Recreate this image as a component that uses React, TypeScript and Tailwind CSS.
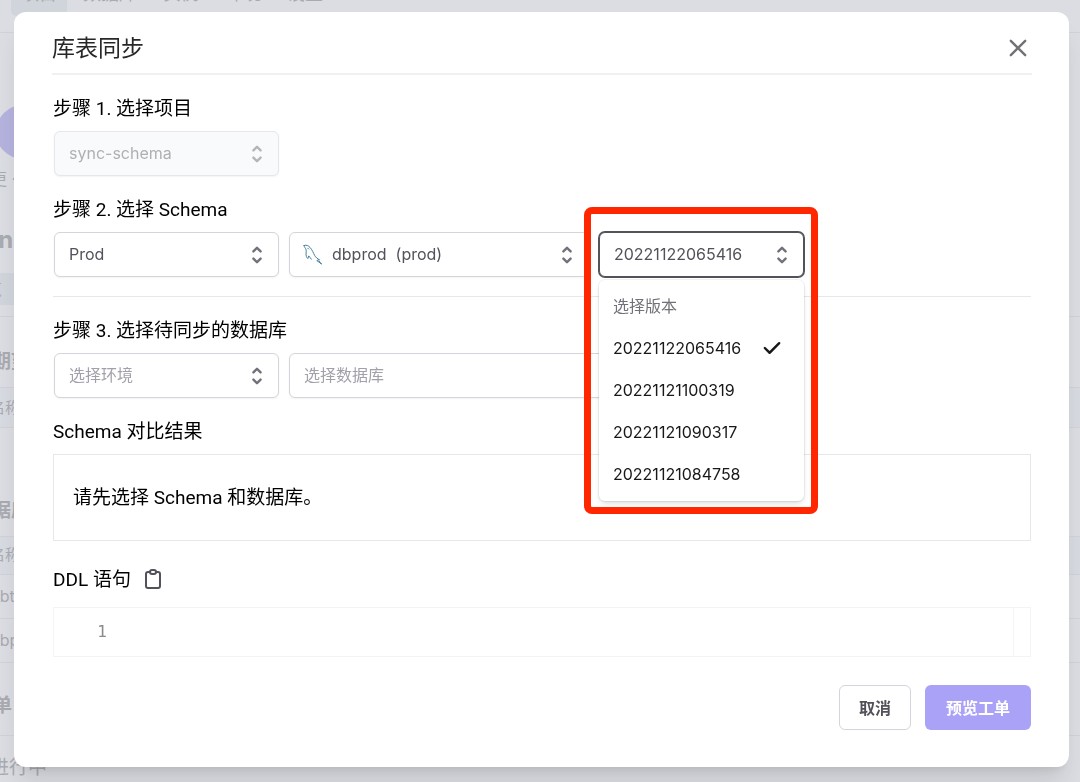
import React, { useState } from 'react';

const SELECTOR_PATH =
  'M10 3a1 1 0 01.707.293l3 3a1 1 0 01-1.414 1.414L10 5.414 7.707 7.707a1 1 0 01-1.414-1.414l3-3A1 1 0 0110 3zm-3.707 9.293a1 1 0 011.414 0L10 14.586l2.293-2.293a1 1 0 011.414 1.414l-3 3a1 1 0 01-1.414 0l-3-3a1 1 0 010-1.414z';

const VERSIONS = ['20221122065416', '20221121100319', '20221121090317', '20221121084758'];

const SelectorIcon = () => (
  <svg viewBox="0 0 20 20" fill="currentColor" className="pointer-events-none absolute inset-y-0 right-2.5 my-auto size-6">
    <path d={SELECTOR_PATH} fillRule="evenodd" clipRule="evenodd" />
  </svg>
);

const DolphinIcon = () => (
  <svg viewBox="0 0 24 24" fill="none" stroke="#2f7391" strokeWidth="0.9" strokeLinecap="round" strokeLinejoin="round" className="pointer-events-none absolute inset-y-0 left-3 my-auto size-6">
    <path d="M3 2.500c2.200-.8 4.300 0 6 1.900 2.400 2.700 3.200 5.400 4.700 8.100 1 1.800 2.800 3.300 4.800 4.300-1.300.1-2.200.4-2.700.9 1.300.9 3.300 1.900 4.600 3.200" />
    <path d="M3 2.500c.2 1.700 1.700 2.700 2.100 4.300.5 2-.6 4.200.3 6.600.5 1.300 1 2 1.600 2.100.5-.7.400-1.800.7-2.600 1 .9 1.700 2.200 2.600 3.300" />
    <path d="M6.800 5.200l.7.800" />
    <path d="M18.500 18.500l.6 1.400 1.200.6" />
  </svg>
);

interface SelectBoxProps {
  label: string;
  value: string;
  className: string;
  placeholder?: boolean;
  disabled?: boolean;
  icon?: React.ReactNode;
}

const SelectBox: React.FC<SelectBoxProps> = ({ label, value, className, placeholder, disabled, icon }) => (
  <div className={`relative ${disabled ? 'text-[#b5b5b9]' : 'text-[#71717a]'} ${className}`}>
    <select
      aria-label={label}
      disabled={disabled}
      className={`h-[45px] w-full appearance-none rounded-md border pr-10 pb-px text-base opacity-100 shadow-xs ${
        icon ? 'pl-[42px]' : 'pl-3.5'
      } ${
        disabled
          ? 'border-gray-200 bg-gray-50 text-[#b0b0b4]'
          : placeholder
            ? 'border-[#d3d5dd] bg-white text-[#a1a1aa]'
            : 'border-[#d3d5dd] bg-white text-[#52525b]'
      }`}
    >
      <option>{value}</option>
    </select>
    {icon}
    <SelectorIcon />
  </div>
);

const StepTitle: React.FC<{ children: React.ReactNode }> = ({ children }) => (
  <h3 className="pt-0.5 font-[Roboto,'Noto_Sans_CJK_SC',sans-serif] text-[19px] leading-[26px] text-black">{children}</h3>
);

const VersionSelect = () => {
  const [version, setVersion] = useState(VERSIONS[0]);

  return (
    <div className="relative w-[205px] shrink-0 text-[#71717a]">
      <select
        aria-label="选择版本"
        value={version}
        onChange={e => setVersion(e.target.value)}
        className="h-[45px] w-full appearance-none rounded-md border border-[#52525b] bg-white pr-10 pb-px pl-3.5 text-base text-[#52525b] ring-1 ring-[#52525b]"
      >
        {VERSIONS.map(v => (
          <option key={v}>{v}</option>
        ))}
      </select>
      <SelectorIcon />

      {/* Open menu */}
      <ul
        role="listbox"
        aria-label="选择版本"
        className="absolute inset-x-0 top-12 z-10 rounded-md bg-white pt-1 pb-1.5 text-base text-[#18181b] shadow-md ring-1 ring-black/5"
      >
        <li role="presentation" className="flex h-[43px] items-center px-3.5 text-[#71717a]">选择版本</li>
        {VERSIONS.map(v => (
          <li
            key={v}
            role="option"
            aria-selected={v === version}
            onClick={() => setVersion(v)}
            className="flex h-[42px] cursor-pointer items-center justify-between pr-5 pl-3.5"
          >
            {v}
            {v === version && (
              <svg viewBox="0 0 20 20" fill="currentColor" className="size-6">
                <path
                  fillRule="evenodd"
                  clipRule="evenodd"
                  d="M16.707 5.293a1 1 0 010 1.414l-8 8a1 1 0 01-1.414 0l-4-4a1 1 0 011.414-1.414L8 12.586l7.293-7.293a1 1 0 011.414 0z"
                />
              </svg>
            )}
          </li>
        ))}
      </ul>

      {/* Highlight frame */}
      <div className="pointer-events-none absolute -top-[25px] -right-3.5 -left-[15px] z-20 h-[307px] rounded-lg border-[7px] border-[#ff2600]" />
    </div>
  );
};

// Project page that shows around the dialog
const PageBehind = () => (
  <div aria-hidden="true" className="h-screen overflow-hidden bg-[#dcdde2] text-base whitespace-nowrap text-[#a9abb1]">
    <nav className="-mt-5 flex h-[53px] items-start gap-1.5 border-b border-[#d1d2d8] pl-[11px] text-lg leading-7">
      <span className="h-9 rounded-md bg-[#d0d4db] px-2.5">项目</span>
      <span className="px-2.5">数据库</span>
      <span className="px-2.5">实例</span>
      <span className="px-2.5">环境</span>
      <span className="px-2.5">设置</span>
    </nav>
    <div className="mt-[72px] -ml-1 size-[54px] rounded-full bg-[#b5b3de]" />
    <p className="mt-2 -ml-[25px] leading-6">变更 ·</p>
    <h1 className="mt-8 -ml-4 text-2xl leading-[34px] font-bold">end</h1>
    <div className="mt-4 h-8 w-10 bg-[#d0d4db]">
      <span className="-ml-3.5 leading-8">览</span>
    </div>
    <div className="mt-[11px] border-t border-[#d1d2d8] pt-[30px]">
      <h2 className="-ml-2 text-[19px] leading-[30px] font-bold">期望</h2>
    </div>
    <div className="mt-2.5 h-[41px] border-y border-[#d1d2d8] bg-[#d7dae0]">
      <span className="-ml-2.5 text-[15px] leading-10">名称</span>
    </div>
    <h2 className="mt-[68px] -ml-[27px] text-[19px] leading-[30px] font-bold">数据库</h2>
    <div className="mt-2.5 h-[39px] border-y border-[#d1d2d8] bg-[#d7dae0]">
      <span className="-ml-2.5 text-[15px] leading-9">名称</span>
    </div>
    <div className="h-11 border-b border-[#d1d2d8] leading-[43px]">
      <span className="-ml-2.5">dbtest</span>
    </div>
    <div className="h-11 border-b border-[#d1d2d8] leading-[43px]">
      <span className="-ml-2.5">dbprod</span>
    </div>
    <h2 className="mt-7 -ml-[26px] text-[19px] leading-[30px] font-bold">工单</h2>
    <div className="mt-3.5 border-t border-[#d1d2d8] pt-[18px]">
      <p className="-ml-2.5 text-[19px] leading-7">进行中</p>
    </div>
  </div>
);

export default function App() {
  return (
    <div className="font-[Inter,'Noto_Sans_CJK_SC',sans-serif]">
      <PageBehind />
      <div className="fixed inset-0 flex flex-col pt-3 pr-[11px] pb-[15px] pl-3.5">
        <div role="dialog" aria-label="库表同步" className="flex-1 rounded-xl bg-white pr-[37px] pl-[38px] shadow-xl">
          <header className="flex h-[63px] items-center justify-between border-b-2 border-[#f0f0f1] pt-2.5">
            <h2 className="text-[23px] leading-8 text-[#27272a]">库表同步</h2>
            <button aria-label="关闭" className="pr-[5px] text-[#71717a]">
              <svg viewBox="0 0 18 18" fill="none" stroke="currentColor" strokeWidth="2.4" strokeLinecap="round" className="size-[18px]">
                <path d="M1.800 1.800l14.400 14.400M16.200 1.800L1.800 16.200" />
              </svg>
            </button>
          </header>

          <div className="px-px pt-[19px]">
            <section className="flex flex-col gap-[9px]">
              <StepTitle>步骤 1. 选择项目</StepTitle>
              <div className="flex gap-2.5 pl-px">
                <SelectBox label="选择项目" value="sync-schema" className="w-[225px]" disabled />
              </div>
            </section>

            <section className="mt-[19px] flex flex-col gap-[9px] border-b border-gray-200 pb-[19px]">
              <StepTitle>步骤 2. 选择 Schema</StepTitle>
              <div className="flex gap-2.5 pl-px">
                <SelectBox label="环境" value="Prod" className="w-[225px]" />
                <SelectBox label="数据库" value={'dbprod\u00a0\u00a0(prod)'} className="w-[300px]" icon={<DolphinIcon />} />
                <VersionSelect />
              </div>
            </section>

            <section className="mt-[19px] flex flex-col gap-[9px]">
              <StepTitle>步骤 3. 选择待同步的数据库</StepTitle>
              <div className="flex gap-2.5 pl-px">
                <SelectBox label="选择环境" value="选择环境" className="w-[225px]" placeholder />
                <SelectBox label="选择数据库" value="选择数据库" className="w-[480px]" placeholder />
              </div>
            </section>

            <section className="mt-[19px] flex flex-col gap-[9px]">
              <StepTitle>Schema 对比结果</StepTitle>
              <p className="flex h-[87px] items-center border border-gray-200 px-[19px] font-[Roboto,'Noto_Sans_CJK_SC',sans-serif] text-[19px] leading-7 text-black">
                请先选择 Schema 和数据库。
              </p>
            </section>

            <section className="mt-6 flex flex-col gap-3.5">
              <div className="flex items-center gap-2.5">
                <StepTitle>DDL 语句</StepTitle>
                <button aria-label="复制" className="text-[#52525b]">
                  <svg viewBox="0 0 24 24" fill="none" stroke="currentColor" strokeWidth="2" strokeLinecap="round" strokeLinejoin="round" className="size-6">
                    <path d="M9 5H7a2 2 0 00-2 2v12a2 2 0 002 2h10a2 2 0 002-2V7a2 2 0 00-2-2h-2M9 5a2 2 0 002 2h2a2 2 0 002-2M9 5a2 2 0 012-2h2a2 2 0 012 2" />
                  </svg>
                </button>
              </div>
              <div className="flex h-[50px] items-center justify-between border border-gray-100">
                <span className="w-[53px] text-right font-['DejaVu_Sans_Mono',monospace] text-base text-[#8a8a8a]">1</span>
                <span className="h-full w-[17px] border-l border-gray-100" />
              </div>
            </section>

            <footer className="mt-7 flex justify-end gap-3.5 text-base font-semibold">
              <button className="h-[45px] rounded-md border border-[#d3d5dd] bg-white px-[19px] text-[#52525b]">取消</button>
              <button className="h-[45px] rounded-md bg-[#a9a2f6] px-[21px] text-white">预览工单</button>
            </footer>
          </div>
        </div>
      </div>
    </div>
  );
}
